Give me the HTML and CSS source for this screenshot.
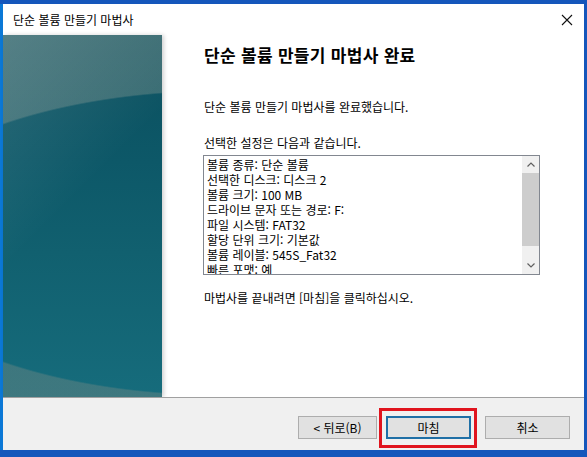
FILE: index.html
```html
<!DOCTYPE html>
<html lang="ko">
<head>
    <meta charset="UTF-8">
    <title>단순 볼륨 만들기 마법사</title>
    <link rel="stylesheet" href="styles.css">
</head>
<body>

<div class="window">
    <div class="titlebar">
        <span class="title">단순 볼륨 만들기 마법사</span>
        <svg class="close" width="12" height="12" viewBox="0 0 12 12">
            <path d="M1 1 L11 11 M11 1 L1 11" stroke="#111" stroke-width="1.1" fill="none"/>
        </svg>
    </div>

    <div class="main">
        <div class="side"></div>
        <div class="content">
            <h1>단순 볼륨 만들기 마법사 완료</h1>
            <p class="done">단순 볼륨 만들기 마법사를 완료했습니다.</p>
            <p class="intro">선택한 설정은 다음과 같습니다.</p>

            <div class="listbox">
                <div class="lines">
                    <div>볼륨 종류: 단순 볼륨</div>
                    <div>선택한 디스크: 디스크 2</div>
                    <div>볼륨 크기: 100 MB</div>
                    <div>드라이브 문자 또는 경로: F:</div>
                    <div>파일 시스템: FAT32</div>
                    <div>할당 단위 크기: 기본값</div>
                    <div>볼륨 레이블: 545S_Fat32</div>
                    <div>빠른 포맷: 예</div>
                </div>
                <div class="scrollbar">
                    <div class="arrow">
                        <svg width="8" height="5" viewBox="0 0 8 5"><path d="M0.5 4.5 L4 1 L7.5 4.5" stroke="#606060" stroke-width="1.2" fill="none"/></svg>
                    </div>
                    <div class="thumb"></div>
                    <div class="track"></div>
                    <div class="arrow">
                        <svg width="8" height="5" viewBox="0 0 8 5"><path d="M0.5 0.5 L4 4 L7.5 0.5" stroke="#606060" stroke-width="1.2" fill="none"/></svg>
                    </div>
                </div>
            </div>

            <p class="hint">마법사를 끝내려면 [마침]을 클릭하십시오.</p>
        </div>
    </div>

    <div class="footer">
        <button class="btn back">&lt; 뒤로(B)</button>
        <div class="highlight">
            <button class="btn finish">마침</button>
        </div>
        <button class="btn cancel">취소</button>
    </div>
</div>

</body>
</html>
```

FILE: styles.css
```css
body {
    margin: 0;
    background: #1556bb;
    font-family: "Noto Sans CJK KR", "Noto Sans", sans-serif;
    font-size: 12px;
    color: #000;
}
.window {
    margin: 4px 0 0 3px;
    width: 581px;
    height: 446px;
    background: #fff;
    display: flex;
    flex-direction: column;
    box-shadow: -3px 0 0 #0b78d6;
}
.titlebar {
    height: 31px;
    display: flex;
    align-items: center;
    justify-content: space-between;
    padding: 0 11px 0 10px;
    flex-shrink: 0;
}
.title {
    font-size: 12px;
}
.main {
    display: flex;
    height: 362px;
    flex-shrink: 0;
}
.side {
    width: 159px;
    flex-shrink: 0;
    box-shadow: 2px 0 4px rgba(0,0,0,0.18);
    background:
        linear-gradient(135deg, rgba(255,255,255,0.14) 0%, rgba(255,255,255,0) 45%),
        radial-gradient(ellipse 354px 153px at 220px 208px, rgba(0,0,0,0) 99%, rgba(95,130,130,0.55) 100%),
        linear-gradient(180deg, #0b4f5e 0%, #0d5868 35%, #11606f 60%, #166c7c 100%);
}
.content {
    flex: 1;
    padding: 9px 0 0 42px;
}
h1 {
    margin: 0;
    font-size: 17px;
    font-weight: bold;
    line-height: 22px;
    letter-spacing: 0.3px;
}
.done {
    margin: 33px 0 0 0;
    line-height: 15px;
}
.intro {
    margin: 21px 0 0 0;
    line-height: 15px;
}
.listbox {
    margin: 5px 0 0 -1px;
    width: 335px;
    height: 118px;
    border: 1px solid #828790;
    display: flex;
}
.lines {
    flex: 1;
    overflow: hidden;
    padding: 1px 0 0 3px;
    line-height: 15px;
}
.scrollbar {
    width: 17px;
    display: flex;
    flex-direction: column;
    background: #f0f0f0;
}
.arrow {
    height: 17px;
    display: flex;
    align-items: center;
    justify-content: center;
}
.thumb {
    height: 73px;
    background: #cdcdcd;
}
.track {
    flex: 1;
}
.hint {
    margin: 15px 0 0 0;
    line-height: 15px;
}
.footer {
    flex: 1;
    background: #f0f0f0;
    border-top: 1px solid #a0a0a0;
    display: flex;
    align-items: flex-start;
    padding: 18px 0 0 295px;
}
.btn {
    font-family: inherit;
    font-size: 12px;
    height: 23px;
    width: 79px;
    background: #e1e1e1;
    border: 1px solid #adadad;
    padding: 0;
    color: #000;
}
.highlight {
    margin: -8px 0 0 2px;
    border: 3px solid #e0141e;
    padding: 5px 3px 6px 4px;
}
.finish {
    width: 85px;
    border: 2px solid #1f6fa6;
}
.cancel {
    margin-left: 8px;
    width: 85px;
}
```
